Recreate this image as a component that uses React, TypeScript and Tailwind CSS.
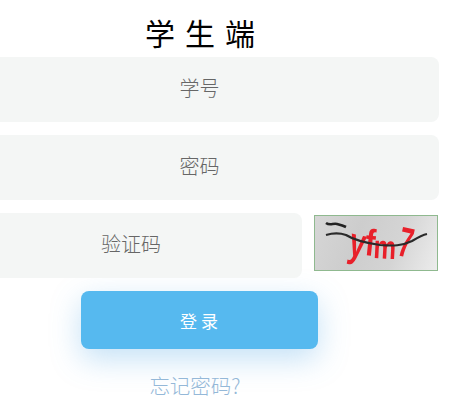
const font = { fontFamily: '"Noto Sans CJK SC", "Liberation Sans", sans-serif' }

function Captcha() {
  return (
    <div className="w-[124px] h-[56px] mt-[2px] border border-[#8fb98f] overflow-hidden bg-[linear-gradient(110deg,#d6d6d6_0%,#cdcdcd_35%,#d4d4d4_65%,#ececec_100%)]">
      <svg width="122" height="54" viewBox="0 0 122 54" className="blur-[0.6px]">
        <g fill="#e8202a" fontFamily='"Liberation Sans", sans-serif' fontWeight="700">
          <text transform="translate(32 39) rotate(12) scale(0.9 1.3)" fontSize="32">y</text>
          <text transform="translate(49 39) rotate(6) scale(1 1.25)" fontSize="30">f</text>
          <text transform="translate(58 42) rotate(3) scale(0.85 1.1)" fontSize="30">m</text>
          <text transform="translate(81 39) rotate(12) scale(0.85 1.4)" fontSize="30">7</text>
        </g>
        <path d="M11 7c4 3 7 0 11 1s7 2 9 3" fill="none" stroke="#222" strokeWidth="2.6" />
        <path d="M11 19c7-2 14-2 20 0 8 5 20 8 34 10 13 1 22 1 32-4 5-3 10-6 15-7" fill="none" stroke="#2a2a2a" strokeWidth="2.2" />
      </svg>
    </div>
  )
}

export default function App() {
  return (
    <div className="w-[451px] h-[414px] overflow-hidden bg-white" style={font}>
      <h1 className="h-[57px] pt-[9px] pl-[10px] text-center text-[30px] leading-[46px] tracking-[10px] text-black font-normal w-[400px]">
        学生端
      </h1>

      <div className="flex flex-col gap-[13px] -ml-10 w-[479px]">
        <div className="h-[65px] pb-1 rounded-lg bg-[#f4f6f5] flex items-center justify-center text-xl font-light text-[#666]">学号</div>
        <div className="h-[65px] pb-[3px] rounded-lg bg-[#f4f6f5] flex items-center justify-center text-xl font-light text-[#666]">密码</div>
        <div className="flex gap-3">
          <div className="w-[342px] h-[65px] pb-1 rounded-lg bg-[#f4f6f5] flex items-center justify-center text-xl font-light text-[#666]">验证码</div>
          <Captcha />
        </div>
      </div>

      <div className="mt-[13px] ml-[81px] w-[237px] h-[58px] pl-[3px] pt-[1px] rounded-lg bg-[#56b9ef] flex items-center justify-center text-[17px] tracking-[4px] text-white shadow-[0_10px_30px_rgba(86,170,230,0.35)]">
        登录
      </div>

      <div className="mt-[23px] w-[390px] text-center text-[20.5px] font-light leading-[26px] text-[#94b8d8]">忘记密码?</div>
    </div>
  )
}
